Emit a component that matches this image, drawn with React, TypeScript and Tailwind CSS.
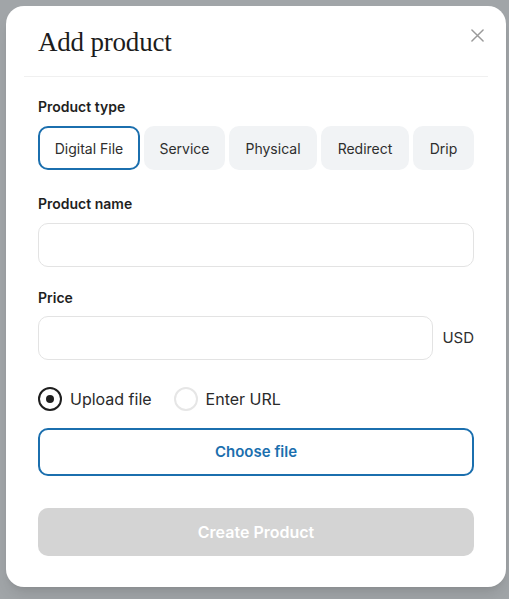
import { useState } from "react";

// widths taken from the reference so the row fills the panel exactly
const PRODUCT_TYPES = [
  { label: "Digital File", w: "w-[102px]" },
  { label: "Service", w: "w-[81px]" },
  { label: "Physical", w: "w-[88px]" },
  { label: "Redirect", w: "w-[88px]" },
  { label: "Drip", w: "w-[61px]" },
];

function CloseIcon() {
  return (
    <svg width="13" height="13" viewBox="0 0 14 14" fill="none" stroke="#9a9a9a" strokeWidth="1.6" strokeLinecap="round">
      <path d="M1 1l12 12M13 1L1 13" />
    </svg>
  );
}

function Radio({ checked, label, onClick }: { checked: boolean; label: string; onClick: () => void }) {
  return (
    <button type="button" onClick={onClick} className="flex items-center gap-2">
      <span
        className={`flex h-6 w-6 items-center justify-center rounded-full border-2 ${
          checked ? "border-[#1f1f1f]" : "border-[#e6e6e6]"
        }`}
      >
        {checked && <span className="h-2 w-2 rounded-full bg-[#1f1f1f]" />}
      </span>
      <span className="text-[16px] text-[#2a2a2a]">{label}</span>
    </button>
  );
}

export default function App() {
  const [type, setType] = useState("Digital File");
  const [mode, setMode] = useState<"upload" | "url">("upload");

  return (
    <div
      className="min-h-screen bg-[#a1a5a8] p-[6px] pb-3"
      style={{ fontFamily: "Inter, 'Noto Sans', sans-serif" }}
    >
      <div className="w-[500px] rounded-[18px] bg-white px-8 pb-[31px] pt-[18px] shadow-lg">
        {/* Header */}
        <div className="flex items-start justify-between">
          <h1
            className="text-[27px] leading-[36px] tracking-[-0.2px] text-[#1c1c1c]"
            style={{ fontFamily: "'Liberation Serif', 'DejaVu Serif', serif" }}
          >
            Add product
          </h1>
          <button type="button" className="mr-[-10px] mt-[5px]">
            <CloseIcon />
          </button>
        </div>
        <div className="-mx-[14px] mt-[16px] border-t border-[#f0f0f0]" />

        {/* Product type */}
        <p className="mt-[19px] text-[14px] font-semibold text-[#1f1f1f]">Product type</p>
        <div className="mt-[9px] flex gap-1">
          {PRODUCT_TYPES.map((t) => {
            const selected = t.label === type;
            return (
              <button
                key={t.label}
                type="button"
                onClick={() => setType(t.label)}
                className={`h-[44px] whitespace-nowrap rounded-[10px] text-[14px] text-[#2e2e2e] ${t.w} ${
                  selected ? "border-2 border-[#1b6fae] bg-white" : "border-2 border-[#f1f3f5] bg-[#f1f3f5]"
                }`}
              >
                {t.label}
              </button>
            );
          })}
        </div>

        {/* Product name */}
        <p className="mt-[23px] text-[14px] font-semibold text-[#1f1f1f]">Product name</p>
        <input
          type="text"
          className="mt-[9px] h-[44px] w-full rounded-[10px] border border-[#e3e3e3] px-3 text-[15px] outline-none"
        />

        {/* Price */}
        <p className="mt-[20px] text-[14px] font-semibold text-[#1f1f1f]">Price</p>
        <div className="mt-[8px] flex items-center gap-[9px]">
          <input
            type="text"
            className="h-[44px] flex-1 rounded-[10px] border border-[#e3e3e3] px-3 text-[15px] outline-none"
          />
          <span className="text-[15px] text-[#2e2e2e]">USD</span>
        </div>

        {/* Upload mode */}
        <div className="mt-[27px] flex items-center gap-[22px]">
          <Radio checked={mode === "upload"} label="Upload file" onClick={() => setMode("upload")} />
          <Radio checked={mode === "url"} label="Enter URL" onClick={() => setMode("url")} />
        </div>

        <button
          type="button"
          className="mt-[17px] h-[48px] w-full rounded-[10px] border-2 border-[#1b6fae] text-[15px] font-semibold text-[#1b6fae]"
        >
          Choose file
        </button>

        <button
          type="button"
          disabled
          className="mt-[32px] h-[48px] w-full rounded-[10px] bg-[#d4d4d4] text-[16px] font-semibold text-white"
        >
          Create Product
        </button>
      </div>
    </div>
  );
}
